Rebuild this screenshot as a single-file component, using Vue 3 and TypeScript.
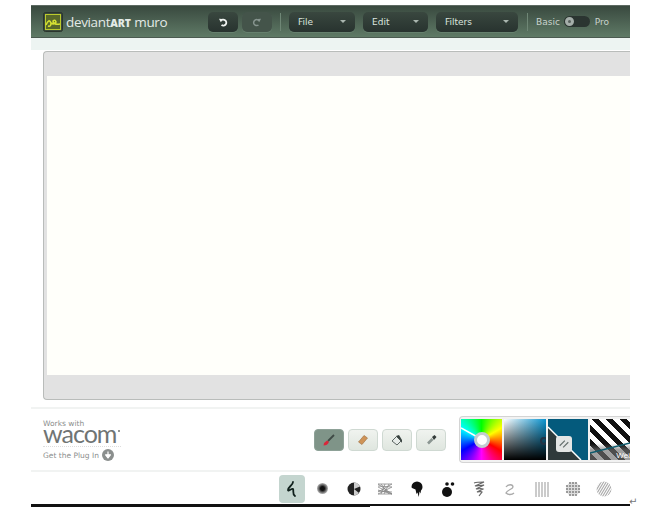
<script setup lang="ts">
const tools = [
  { id: 'brush', active: true },
  { id: 'eraser', active: false },
  { id: 'bucket', active: false },
  { id: 'dropper', active: false },
]
const hatchLines = [0, 1, 2, 3, 4, 5, 6, 7, 8, 9, 10, 11]
const dots: number[][] = []
for (let y = 6; y <= 18; y += 3) {
  for (let x = 6; x <= 18; x += 3) {
    if ((x - 12) ** 2 + (y - 12) ** 2 <= 49) dots.push([x, y])
  }
}
</script>

<template>
  <div class="page">
    <div class="app">
      <header class="topbar">
        <div class="logo">
          <svg class="logo-icon" viewBox="0 0 20 20" width="20" height="20">
            <rect x="0.5" y="0.5" width="19" height="19" rx="2" fill="#3b4a3c" stroke="#2b352d" />
            <rect x="2.5" y="2.5" width="15" height="15" fill="#59682a" stroke="#bccb2c" />
            <path d="M3 13 Q6 6 8 11 Q8 15 5 14 M8 11 Q11 13 13 10 Q12 7 10 9 Q10 13 17 12" fill="none" stroke="#d5e033" stroke-width="1.6" />
          </svg>
          <span class="logo-text">deviant<b>ART</b> muro</span>
        </div>
        <div class="actions">
          <button class="dark icon-btn">
            <svg viewBox="0 0 10 10" width="10" height="10"><path d="M2.800 4 A3 3 0 1 1 3.500 8" fill="none" stroke="#f0f3f1" stroke-width="1.800" /><path d="M1 1.800 L4.500 2 L2.800 5.200Z" fill="#f0f3f1" /></svg>
          </button>
          <button class="dark icon-btn off">
            <svg viewBox="0 0 10 10" width="10" height="10"><path d="M7.200 4 A3 3 0 1 0 6.500 8" fill="none" stroke="#87958f" stroke-width="1.500" /><path d="M9 1.800 L5.500 2 L7.200 5.200Z" fill="#87958f" /></svg>
          </button>
        </div>
        <i class="sep first"></i>
        <div class="menus">
          <button class="dark menu file"><span>File</span><i class="caret"></i></button>
          <button class="dark menu edit"><span>Edit</span><i class="caret"></i></button>
          <button class="dark menu filters"><span>Filters</span><i class="caret"></i></button>
        </div>
        <i class="sep second"></i>
        <div class="mode">
          <span>Basic</span>
          <span class="switch"><i></i></span>
          <span>Pro</span>
        </div>
      </header>

      <section class="stage">
        <div class="panel">
          <div class="canvas"></div>
        </div>
      </section>

      <section class="controls">
        <div class="wacom">
          <div class="works">Works with</div>
          <div class="brand">wacom<i class="tm"></i></div>
          <div class="plugin">
            <span>Get the Plug In</span>
            <svg viewBox="0 0 12 12" width="12" height="12">
              <circle cx="6" cy="6" r="6" fill="#8b8f8e" />
              <path d="M6 2.5V7M3.6 5.8 6 9l2.4-3.2Z" fill="#fff" stroke="#fff" stroke-width="1.2" stroke-linejoin="round" />
            </svg>
          </div>
        </div>

        <div class="tools">
          <button v-for="t in tools" :key="t.id" class="tool" :class="{ active: t.active }">
            <svg viewBox="0 0 18 18" width="18" height="18">
              <template v-if="t.id === 'brush'">
                <path d="M14 4 8 10" stroke="#3f4a46" stroke-width="1.800" />
                <path d="M3.500 14.500 Q4 11 7 9.500 L9 11 Q7.500 14.500 3.500 14.500Z" fill="#d9273a" />
              </template>
              <template v-else-if="t.id === 'eraser'">
                <path d="M4.500 11 10 4.500l3.500 2.500-5.500 6.500Z" fill="#cf9458" stroke="#9b6b3c" stroke-width=".6" />
              </template>
              <template v-else-if="t.id === 'bucket'">
                <path d="M4 10 8.500 5.500l4.500 4.500-4 4Z" fill="#e6ebe8" stroke="#5c6663" />
                <path d="M8 5 11 4l3 5v3l-2-3Z" fill="#3a4441" />
              </template>
              <template v-else>
                <path d="M6 12.500 10.500 8" stroke="#8b9692" stroke-width="2.600" />
                <path d="M10 6l2.500-2 2 2-2.500 3Z" fill="#333b39" />
              </template>
            </svg>
          </button>
        </div>

        <div class="colors">
          <div class="tile wheel">
            <svg class="wheel-line" viewBox="0 0 41 41"><path d="M0 9 20 20" stroke="#fff" stroke-width="1.500" /></svg>
            <i class="ring"></i>
          </div>
          <div class="tile shade"><i class="ring small"></i></div>
          <div class="tile swatch">
            <svg viewBox="0 0 40 41" width="40" height="41">
              <path d="M0 8 33 41H0Z" fill="#2f3a3b" />
              <path d="M0 8 33 41" stroke="#fff" stroke-width="1.500" />
            </svg>
            <span class="swap">
              <svg viewBox="0 0 14 14" width="12" height="12"><path d="M2 9 8 3M6 11l6-6" stroke="#66706e" stroke-width="1.400" /></svg>
            </span>
          </div>
          <div class="tile stripes">
            <svg class="stripe-line" viewBox="0 0 40 41"><path d="M0 34 40 24" stroke="#0d5a6c" stroke-width="1.500" /></svg>
            <span class="stripe-label">Wei</span>
          </div>
        </div>
      </section>

      <nav class="brushes">
        <div class="brush selected">
          <svg viewBox="0 0 26 26" width="26" height="26"><path d="M14 6c0 3-5 5-5 8 0 2 4-2 5-1 1 2-1 5 2 7" fill="none" stroke="#10201c" stroke-width="1.800" stroke-linecap="round" stroke-linejoin="round" /></svg>
        </div>
        <div class="brush"><i class="soft"></i></div>
        <div class="brush">
          <svg viewBox="0 0 24 24" width="24" height="24"><circle cx="12" cy="12" r="6.500" fill="#222" /><path d="M12 5.500a6.500 6.500 0 0 1 6 4L12 12Zm0 6.500 5 4a6.500 6.500 0 0 1-5 2.500Z" fill="#ccc" /></svg>
        </div>
        <div class="brush">
          <svg viewBox="0 0 24 24" width="24" height="24"><path d="M5 7 19 17M5 10l14 7M5 13l14 4M5 15 19 7M5 17 19 10M8 7l8 10M12 7 8 17M16 7l-5 10M5 9l14 1M5 14l14 1M5 7h14M5 17h14" stroke="#888" stroke-width=".8" fill="none" /></svg>
        </div>
        <div class="brush">
          <svg viewBox="0 0 24 24" width="24" height="24"><path d="M12 4.500a5.500 5.500 0 0 1 5.500 5.500c0 2-1 3-1.500 3.500l-.500 3-1-2-.700 5.500-1.300-4.500-1 1.500-1-4.500C8 11.500 6.500 11 6.500 10A5.500 5.500 0 0 1 12 4.500Z" fill="#111" /></svg>
        </div>
        <div class="brush">
          <svg viewBox="0 0 24 24" width="24" height="24"><circle cx="11" cy="15" r="5" fill="#111" /><circle cx="11" cy="7" r="1.800" fill="#111" /><circle cx="16.500" cy="7" r="1.800" fill="#111" /></svg>
        </div>
        <div class="brush">
          <svg viewBox="0 0 24 24" width="24" height="24"><path d="M7 6c3-1 7-1 10-1L8 9c3 0 6-1 9-1L9 12c3 0 5-1 7 0l-6 3c2 0 4-1 5 0l-3 4" fill="none" stroke="#666" stroke-width="1.200" /></svg>
        </div>
        <div class="brush">
          <svg viewBox="0 0 24 24" width="24" height="24"><path d="M8 10c2-3 7-3 7 0 0 2-6 3-7 6 2 2 6 2 8 0" fill="none" stroke="#aaa" stroke-width="1.300" /></svg>
        </div>
        <div class="brush">
          <svg viewBox="0 0 24 24" width="24" height="24"><path d="M6 5v15M9 5v15M12 5v15M15 5v15M18 5v15" stroke="#bbb" stroke-width="1.500" /></svg>
        </div>
        <div class="brush">
          <svg viewBox="0 0 24 24" width="24" height="24"><circle cx="12" cy="12" r="7" fill="#ddd" /><circle v-for="(d, i) in dots" :key="i" :cx="d[0]" :cy="d[1]" r="1.100" fill="#888" /></svg>
        </div>
        <div class="brush">
          <svg viewBox="0 0 24 24" width="24" height="24">
            <clipPath id="hatch"><circle cx="12" cy="12" r="7.500" /></clipPath>
            <g clip-path="url(#hatch)" stroke="#aaa" stroke-width="1.100">
              <path v-for="n in hatchLines" :key="n" :d="`M${-6 + n * 2.5} 22 L${6 + n * 2.5} 2`" />
            </g>
          </svg>
        </div>
      </nav>
      <div class="baseline"><span class="return">↵</span></div>
    </div>
  </div>
</template>

<style>
html, body { background: #fff; }
</style>

<style scoped>
.page { width: 657px; height: 517px; padding: 5px 0 0 31px; box-sizing: border-box; overflow: hidden; font-family: "Liberation Sans", Arial, sans-serif; }
.app { width: 599px; }
.topbar { height: 33px; display: flex; align-items: center; padding-left: 12px; box-sizing: border-box; background: linear-gradient(#39493f, #5f7a66); border-top: 1px solid #5d6a62; border-bottom: 1px solid #4b5a50; }
.logo { width: 165px; display: flex; align-items: center; gap: 3px; flex: none; }
.logo-icon { display: block; }
.logo-text { color: #e3eae6; font: 13.500px "Open Sans", sans-serif; letter-spacing: -.35px; white-space: nowrap; }
.logo-text b { font-size: 10.500px; font-weight: 800; letter-spacing: 0; }
button { border: 0; padding: 0; margin: 0; font: inherit; }
.dark { height: 20px; border-radius: 5px; background: linear-gradient(#39473f, #28332f); color: #dce4df; display: flex; align-items: center; box-shadow: 0 1px 0 #66806e; }
.actions { display: flex; gap: 4px; }
.icon-btn { width: 30px; justify-content: center; }
.icon-btn.off { background: #44544a; }
.sep { display: block; width: 1px; height: 18px; background: #6f8776; flex: none; }
.sep.first { margin: 0 8px 0 8px; }
.sep.second { margin: 0 8px 0 9px; }
.menus { display: flex; gap: 8px; }
.menu { box-sizing: border-box; padding: 0 9px; justify-content: space-between; font: 9px "DejaVu Sans", sans-serif; }
.file { width: 66px; }
.edit { width: 65px; }
.filters { width: 82px; }
.caret { width: 0; height: 0; border: 3px solid transparent; border-top: 3px solid #aab6af; border-bottom: 0; }
.mode { display: flex; align-items: center; color: #c9d3cd; font: 9px "DejaVu Sans", sans-serif; }
.switch { width: 26px; height: 11px; border-radius: 6px; background: #2b3531; margin: 0 5px 0 4px; display: flex; align-items: center; padding-left: 1px; box-sizing: border-box; }
.switch i { width: 9px; height: 9px; border-radius: 50%; box-sizing: border-box; border: 3px solid #a5aeaa; background: #59635f; }
.stage { background: linear-gradient(#edf4f2 0, #edf4f2 12px, #fff 12px); padding: 13px 0 0 12px; }
.panel { height: 349px; box-sizing: border-box; padding: 24px 0 24px 3px; background: #e2e2e2; border: 1px solid #b9bcba; border-right: 0; border-radius: 4px 0 0 4px; }
.canvas { height: 100%; background: #fffffa; }
.controls { height: 65px; margin-top: 7px; border-top: 2px solid #f1f3f2; border-bottom: 2px solid #f1f3f2; display: flex; align-items: center; box-sizing: border-box; padding-left: 12px; }
.wacom { width: 271px; flex: none; align-self: flex-start; padding-top: 10px; color: #8b8e8d; font: 7.500px "DejaVu Sans", sans-serif; }
.works { line-height: 9px; }
.brand { font: 400 25px/11px Lato, sans-serif; color: #707473; letter-spacing: -1px; width: 78px; height: 18px; border-bottom: 1px dotted #ddd; white-space: nowrap; }
.tm { display: inline-block; width: 2px; height: 2px; margin-left: 2px; border-radius: 50%; background: #707473; vertical-align: 11px; }
.plugin { display: flex; align-items: center; gap: 3px; margin-top: 2px; }
.tools { display: flex; gap: 4px; width: 145px; flex: none; }
.tool { width: 30px; height: 22px; border-radius: 4px; background: linear-gradient(#f0f3ef, #dfe6df); border: 1px solid #cfd9d2; box-sizing: border-box; display: flex; align-items: center; justify-content: center; }
.tool.active { background: #7f9488; border-color: #8da197; }
.colors { flex: 1; height: 47px; box-sizing: border-box; padding: 2px 0 2px 1px; background: #f2f2f2; border: 1px solid #d4d4d4; border-right: 0; border-radius: 4px 0 0 4px; display: flex; gap: 2px; overflow: hidden; }
.tile { position: relative; width: 41px; height: 41px; flex: none; overflow: hidden; }
.wheel { background: conic-gradient(#0f0, #ff0, #f00, #f0f, #00f, #0ff, #0f0); }
.wheel-line { position: absolute; inset: 0; }
.ring { position: absolute; left: 13px; top: 13px; width: 16px; height: 16px; box-sizing: border-box; border-radius: 50%; border: 3px solid #c3ccd1; background: #fff; }
.ring.small { left: 36px; top: 18px; width: 8px; height: 8px; border-width: 2px; background: transparent; border-color: #234; }
.shade { width: 42px; background: linear-gradient(transparent, #000), linear-gradient(90deg, #fff, #0a93cf); }
.swatch { width: 40px; background: #045a7c; }
.swatch svg { display: block; }
.swap { position: absolute; left: 8px; top: 17px; width: 16px; height: 16px; border-radius: 3px; background: #e4e6e5; display: flex; align-items: center; justify-content: center; }
.stripes { background: linear-gradient(transparent 60%, rgba(110, 110, 110, .65) 75%), repeating-linear-gradient(45deg, #111 0 5px, #fff 5px 10px); width: 40px; }
.stripe-line { position: absolute; inset: 0; }
.stripe-label { position: absolute; right: 0; bottom: 0; color: #fff; font-size: 8px; }
.brushes { height: 32px; display: flex; align-items: center; padding-left: 248px; padding-top: 1px; box-sizing: border-box; }
.brush { width: 31.300px; height: 28px; flex: none; display: flex; align-items: center; justify-content: center; }
.brush.selected { width: 26px; margin-right: 2px; border-radius: 4px; background: #c4d5cf; }
.soft { width: 11px; height: 11px; border-radius: 50%; background: radial-gradient(#111 25%, rgba(60, 60, 60, .55) 60%, transparent); }
.baseline { position: relative; height: 3px; background: linear-gradient(#111, #111) 0 0 / 339px 3px no-repeat, linear-gradient(#111, #111) 0 0 / 100% 2px no-repeat; }
.return { position: absolute; left: 598px; top: -8px; font: 10px "DejaVu Sans", sans-serif; color: #777; }
</style>
